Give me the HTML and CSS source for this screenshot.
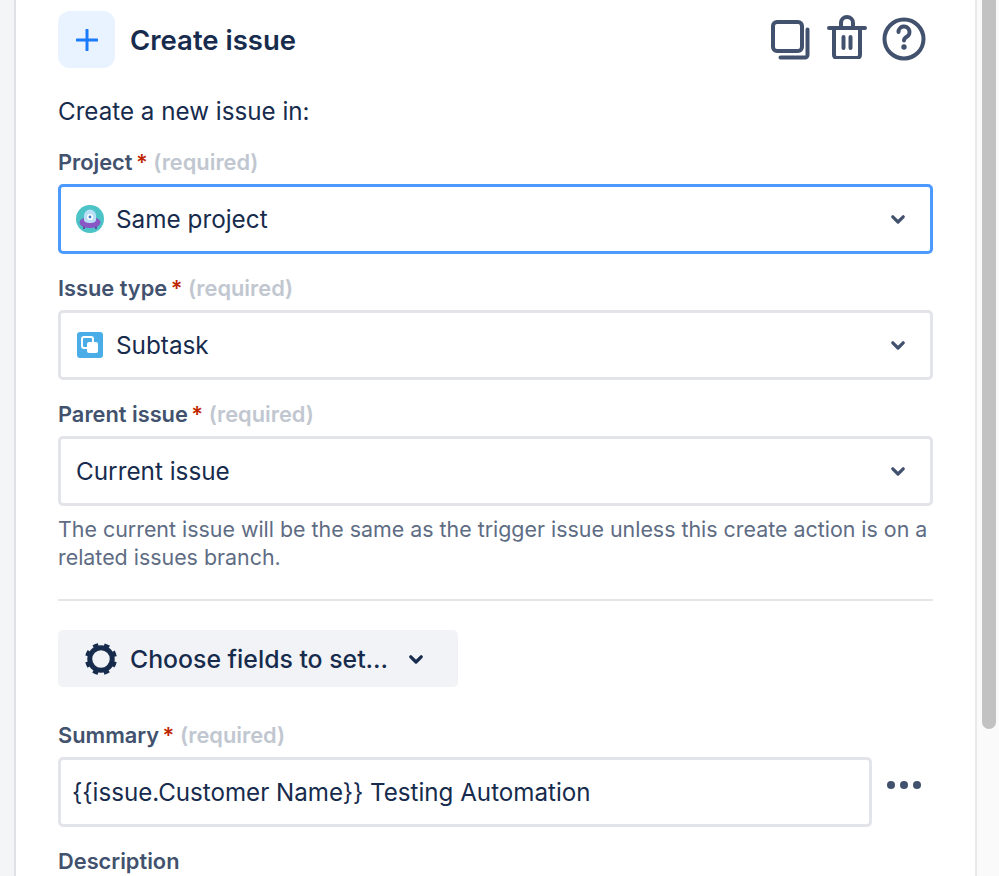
FILE: index.html
```html
<!DOCTYPE html>
<html lang="en">
<head>
<meta charset="utf-8">
<title>Create issue</title>
<link rel="stylesheet" href="styles.css">
</head>
<body>
<div class="page">
  <div class="gutter"></div>
  <main class="panel">
    <header class="head">
      <div class="head-left">
        <span class="plus-tile">
          <svg class="plus" viewBox="0 0 22 22"><path d="M11 1v20M1 11h20"/></svg>
        </span>
        <h1 class="title">Create issue</h1>
      </div>
      <div class="actions">
        <svg class="act act-copy" viewBox="0 0 40 40"><rect x="2" y="2" width="29" height="29" rx="4"/><path d="M36.500 9.500V35a2.500 2.500 0 0 1-2.500 2.500H9.500"/></svg>
        <svg class="act act-trash" viewBox="0 0 40 44"><path d="M2 13h36M7 13v27a3 3 0 0 0 3 3h20a3 3 0 0 0 3-3V13M14 13V8a6 6 0 0 1 12 0v5M16.500 22v11M23.500 22v11"/></svg>
        <svg class="act act-help" viewBox="0 0 44 44"><circle cx="22" cy="22" r="19.500"/><path d="M16.500 15a5.500 5.500 0 1 1 8.200 4.800c-1.700 1-2.700 1.800-2.700 3.700"/><circle class="dot" cx="22" cy="30" r="2.700"/></svg>
      </div>
    </header>

    <p class="intro">Create a new issue in:</p>

    <div class="field">
      <div class="label">Project<span class="star">*</span><span class="req">(required)</span></div>
      <div class="select focused">
        <svg class="ico" viewBox="0 0 28 28">
          <circle cx="14" cy="14" r="14" fill="#4cc3c7"/>
          <ellipse cx="14" cy="17.500" rx="10.500" ry="5.500" fill="#8a55c4"/>
          <path d="M8 11a6 6.500 0 0 1 12 0v4c0 2-2.500 3-6 3s-6-1-6-3z" fill="#b8dff5"/>
          <circle cx="14" cy="12" r="3" fill="#fff"/>
          <circle cx="14" cy="12" r="1.400" fill="#3a76c4"/>
          <path d="M8 21.500v2.500M20 21.500v2.500" stroke="#5e3a9c" stroke-width="1.600"/>
        </svg>
        <span class="val">Same project</span>
        <svg class="chev" viewBox="0 0 14 10"><path d="M1.800 1.800L7 7l5.200-5.200"/></svg>
      </div>
    </div>

    <div class="field">
      <div class="label">Issue type<span class="star">*</span><span class="req">(required)</span></div>
      <div class="select">
        <svg class="ico ico-sub" viewBox="0 0 26 26">
          <rect width="26" height="26" rx="3" fill="#4bade8"/>
          <rect x="5" y="5" width="11" height="11" rx="2" fill="none" stroke="#fff" stroke-width="2"/>
          <rect x="10" y="10" width="11" height="11" rx="2" fill="#fff"/>
        </svg>
        <span class="val">Subtask</span>
        <svg class="chev" viewBox="0 0 14 10"><path d="M1.800 1.800L7 7l5.200-5.200"/></svg>
      </div>
    </div>

    <div class="field">
      <div class="label">Parent issue<span class="star">*</span><span class="req">(required)</span></div>
      <div class="select">
        <span class="val">Current issue</span>
        <svg class="chev" viewBox="0 0 14 10"><path d="M1.800 1.800L7 7l5.200-5.200"/></svg>
      </div>
    </div>

    <p class="help">The current issue will be the same as the trigger issue unless this create action is on a related issues branch.</p>

    <hr class="rule">

    <button class="choose" type="button">
      <svg class="gear" viewBox="0 0 32 32">
        <circle class="gear-ring" cx="16" cy="16" r="11.250"/>
        <circle class="gear-teeth" cx="16" cy="16" r="13.500" transform="rotate(11.25 16 16)"/>
      </svg>
      <span>Choose fields to set...</span>
      <svg class="chev chev-dark" viewBox="0 0 14 10"><path d="M1.800 1.800L7 7l5.200-5.200"/></svg>
    </button>

    <div class="field summary">
      <div class="label">Summary<span class="star">*</span><span class="req">(required)</span></div>
      <div class="row">
        <div class="text-input">{{issue.Customer Name}} Testing Automation</div>
        <span class="more"><i></i><i></i><i></i></span>
      </div>
    </div>

    <div class="label desc">Description</div>
  </main>
  <aside class="scroll"><div class="thumb"></div></aside>
</div>
</body>
</html>
```

FILE: styles.css
```css
* { box-sizing: border-box; }
html, body { margin: 0; height: 100%; overflow: hidden; background: #fff; }
body { font-family: Inter, "Noto Sans", sans-serif; color: #172b4d; }

.page { display: flex; height: 876px; width: 999px; }
.gutter { background: #f4f5f7; border-right: 2px solid #dfe1e6; width: 16px; flex: none; }
.panel { width: 961px; flex: none; padding: 11px 42px 0 42px; border-right: 2px solid #e8e9ec; }
.scroll { flex: 1; background: #fafafa; position: relative; }
.thumb { position: absolute; left: 5px; top: -20px; width: 14px; height: 749px; border-radius: 7px; background: #c2c2c2; }

.head { display: flex; justify-content: space-between; align-items: flex-start; height: 57px; }
.head-left { display: flex; align-items: center; gap: 15px; }
.plus-tile { width: 57px; height: 57px; border-radius: 12px; background: #e9f2ff; display: flex; align-items: center; justify-content: center; }
.plus { width: 22px; height: 22px; fill: none; stroke: #1a7bff; stroke-width: 3; stroke-linecap: round; }
.title { margin: 0; font-size: 27.500px; line-height: 36px; font-weight: 600; color: #172b4d; }

.actions { width: 158px; height: 57px; margin-right: 6px; display: flex; }
.act { fill: none; stroke: #42526e; stroke-width: 4; stroke-linecap: round; stroke-linejoin: round; flex: none; }
.act-copy { width: 40px; height: 40px; margin-top: 9px; margin-left: 2px; }
.act-trash { width: 40px; height: 44px; margin-top: 4px; margin-left: 16px; }
.act-help { width: 44px; height: 44px; margin-top: 6px; margin-left: 15px; }
.act .dot { fill: #42526e; stroke: none; }

.intro { margin: 26px 0 17px; font-size: 24.200px; line-height: 36px; color: #172b4d; }

.field { margin-bottom: 19px; }
.label { font-size: 21.800px; line-height: 30px; font-weight: 600; color: #42526e; margin-bottom: 7px; }
.star { color: #bf2600; margin-left: 3.500px; }
.req { color: #c1c7d0; margin-left: 5.500px; }

.select { height: 70px; border: 3px solid #e2e4e9; border-radius: 5px; background: #fff; display: flex; align-items: center; padding: 0 25px 0 15px; }
.select.focused { border-color: #4c9aff; }
.ico { width: 28px; height: 28px; margin-right: 12px; flex: none; }
.ico-sub { width: 26px; height: 26px; margin-left: 1px; margin-right: 13px; }
.val { flex: 1; font-size: 24.300px; line-height: 32px; color: #172b4d; }
.chev { width: 14px; height: 10px; margin-top: 2px; fill: none; stroke: #42526e; stroke-width: 3.200; stroke-linecap: round; stroke-linejoin: round; flex: none; }
.chev-dark { stroke: #172b4d; margin-left: 21px; }

.help { margin: -10px 0 0; font-size: 21.400px; line-height: 28px; color: #5e6c84; }
.rule { border: 0; height: 2px; background: #e4e6ea; margin: 28px 0 29px; }

.choose { display: flex; align-items: center; width: 400px; height: 57px; padding: 0 0 0 27px; border: 0; border-radius: 5px; background: #f2f3f6; font-family: inherit; font-size: 24.800px; font-weight: 500; color: #172b4d; }
.gear { width: 32px; height: 32px; margin-right: 13px; flex: none; }
.gear-ring { fill: none; stroke: #172b4d; stroke-width: 5; }
.gear-teeth { fill: none; stroke: #172b4d; stroke-width: 5; stroke-dasharray: 5 5.603; }

.summary { margin: 33px 0 19px; }
.row { display: flex; align-items: center; }
.text-input { width: 814px; height: 70px; border: 3px solid #e2e4e9; border-radius: 5px; display: flex; align-items: center; padding: 0 0 0 11px; font-size: 24.150px; color: #172b4d; flex: none; }
.more { display: flex; gap: 5px; margin-left: 15px; margin-top: -14px; }
.more i { width: 8px; height: 8px; border-radius: 50%; background: #42526e; display: block; }
.desc { margin: 0; }
```
